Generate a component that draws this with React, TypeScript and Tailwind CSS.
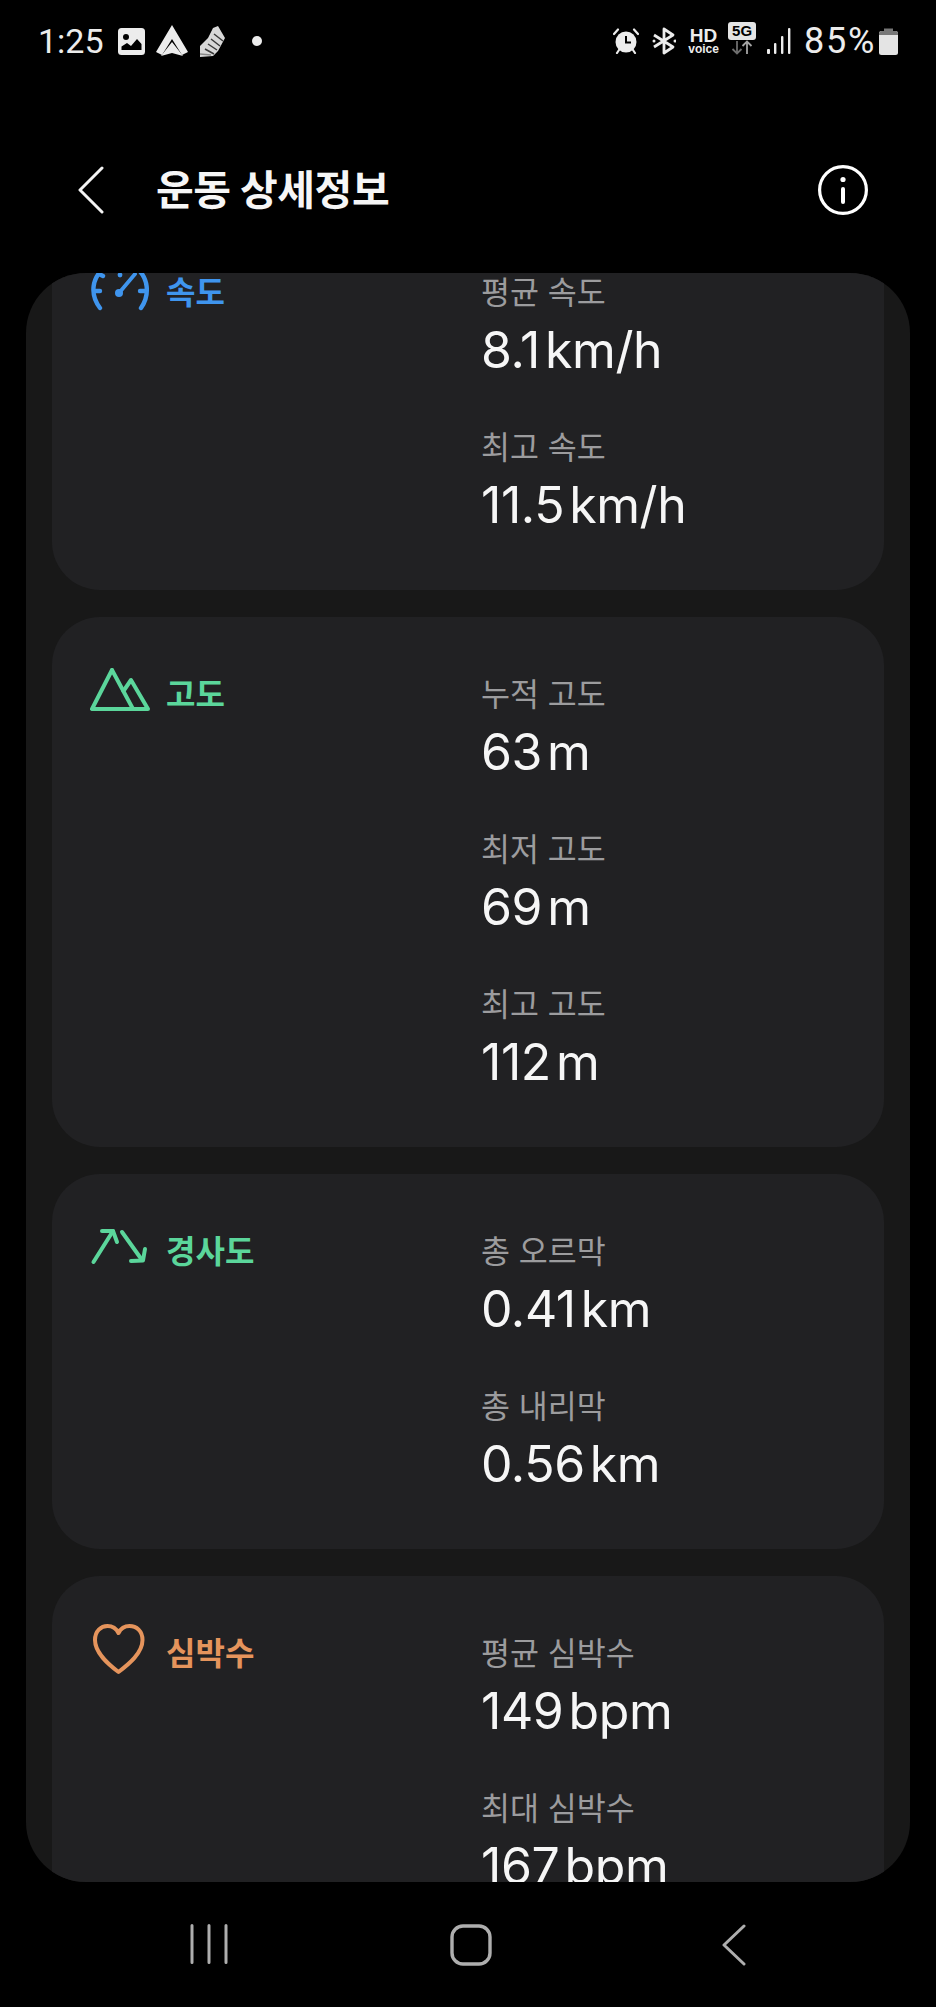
import React from "react";

const FONT = "font-['Inter','Noto_Sans_CJK_KR',sans-serif]";

function Row({ label, value, unit }: { label: string; value: string; unit: string }) {
  return (
    <div>
      <div className="h-[40px] pt-[1px] flex items-center text-[31.5px] leading-[40px] text-[#9c9c9e] whitespace-nowrap">{label}</div>
      <div className="mt-[8px] mb-[2px] h-[60px] flex items-center text-[50px] leading-[60px] text-[#f6f6f6] whitespace-nowrap tracking-[-0.4px]">
        <span>{value}</span>
        <span className="ml-[5px]">{unit}</span>
      </div>
    </div>
  );
}

type Item = { label: string; value: string; unit: string };

function Card({ icon, title, color, rows }: { icon: React.ReactNode; title: string; color: string; rows: Item[] }) {
  return (
    <div className="rounded-[48px] bg-[#212123] pt-[57px] pb-[53px] flex">
      <div className="w-[429px] pl-[38px] flex items-start gap-[17px] h-[40px] shrink-0">
        <div className="w-[60px] h-[60px] -mt-[10px] shrink-0">{icon}</div>
        <div className={`text-[32px] leading-[40px] mt-[1px] -ml-[1px] font-bold ${color}`}>{title}</div>
      </div>
      <div className="flex flex-col gap-[45px]">
        {rows.map((r) => (
          <Row key={r.label} {...r} />
        ))}
      </div>
    </div>
  );
}

const Gauge = (
  <svg viewBox="0 0 60 60" className="w-full h-full" fill="none" stroke="#3f95ee" strokeWidth="4.4" strokeLinecap="round">
    <path d="M10 46 C0 33 1 15 16 5" />
    <path d="M51 46 C60 33 59 15 45 5" />
    <path d="M4 29 H10" />
    <path d="M50 29 H56" />
    <path d="M13 14 L9 12" />
    <path d="M29 31 L45 12" strokeWidth="3.8" />
    <circle cx="29" cy="31" r="4" fill="#3f95ee" stroke="none" />
    <circle cx="30" cy="13" r="2.4" fill="#3f95ee" stroke="none" />
  </svg>
);

const Mountain = (
  <svg viewBox="0 0 60 60" className="w-full h-full" fill="none" stroke="#5bd69b" strokeWidth="4" strokeLinejoin="round" strokeLinecap="round">
    <path d="M22 6 L2 45 H58 L41 16 L33.5 27" />
    <path d="M22 6 L43 45" />
  </svg>
);

const Slope = (
  <svg viewBox="0 0 60 60" className="w-full h-full" fill="none" stroke="#5bd69b" strokeWidth="4" strokeLinejoin="round" strokeLinecap="round">
    <path d="M3.5 41 L23 10" />
    <path d="M12 10 H23 L27 21" />
    <path d="M32 11 L52 39" />
    <path d="M41 40 L53 39.5 L55 28" />
  </svg>
);

const Heart = (
  <svg viewBox="0 0 60 60" className="w-full h-full" fill="none" stroke="#e5945c" strokeWidth="4" strokeLinejoin="round">
    <path d="M28.5 49 C18 41 5 30 5 17 C5 8 11 3 17.5 3 C22.5 3 26.5 6 28.5 10 C30.5 6 34.5 3 39.5 3 C46.5 3 52.5 8 52.5 17 C52.5 30 39 41 28.5 49 Z" />
  </svg>
);

function StatusBar() {
  return (
    <div className={`h-[82px] flex items-center pl-[38px] pr-[38px] text-[#ececec] ${FONT}`}>
      <span className="font-['Roboto',sans-serif] text-[34px] leading-none w-[62px] whitespace-nowrap">1:25</span>
      <svg viewBox="0 0 27 27" className="w-[27px] h-[27px] ml-[18px]">
        <rect width="27" height="27" rx="3.5" fill="#ececec" />
        <circle cx="8" cy="9" r="3" fill="#000" />
        <path d="M3.5 22 V18.5 L9 15 L13 18 L19 11 L23.5 16 V22 Z" fill="#000" />
      </svg>
      <svg viewBox="0 0 32 32" className="w-[32px] h-[32px] ml-[11px]">
        <path d="M16 0 L32 27 L26 30 L16 14 L6 30 L0 27 Z" fill="#ececec" />
        <path d="M16 17 L27 31 L16 28 L5 31 Z" fill="#ececec" />
      </svg>
      <svg viewBox="0 0 28 34" className="w-[28px] h-[34px] ml-[11px]">
        <path d="M19 2 L26 14 L19 27 L14 32 L1 33 L1 22 L9 14 L14 4 Z" fill="#d8d8d8" />
        <path d="M15 30 L6 25 M18 26 L9 20 M21 22 L12 15 M24 17 L15 10" stroke="#3a3a3a" strokeWidth="1.5" />
        <path d="M1 30 L12 31" stroke="#888" strokeWidth="1.5" />
      </svg>
      <span className="w-[10px] h-[10px] rounded-full bg-[#ececec] ml-[25px]" />
      <div className="flex-1" />
      <svg viewBox="0 0 26 26" className="w-[26px] h-[26px]">
        <circle cx="13" cy="14" r="10.5" fill="#ececec" />
        <path d="M13 8 V14.5 H18" fill="none" stroke="#000" strokeWidth="2" />
        <path d="M1 6 L5 1.5 M25 6 L21 1.5 M4 25 L6 22 M22 25 L20 22" stroke="#ececec" strokeWidth="2.2" strokeLinecap="round" />
      </svg>
      <svg viewBox="0 0 24 28" className="w-[24px] h-[28px] ml-[13px]" fill="none" stroke="#ececec" strokeWidth="2.8" strokeLinejoin="round">
        <path d="M2 8 L21 20 L12 26 V2 L21 8 L2 20" />
        <circle cx="2" cy="14" r="1.5" fill="#ececec" stroke="none" />
        <circle cx="23" cy="14" r="1.5" fill="#ececec" stroke="none" />
      </svg>
      <div className="ml-[13px] w-[29px] flex flex-col items-center font-['Liberation_Sans',sans-serif] font-bold leading-none">
        <span className="text-[19px] leading-[15px]">HD</span>
        <span className="text-[12px] leading-[10px] mt-[1px]">voice</span>
      </div>
      <div className="ml-[10px] w-[28px] h-[33px] -mt-[5px] flex flex-col">
        <div className="h-[18px] rounded-[3px] bg-[#e4e4e4] text-black text-[15px] leading-[18px] text-center font-bold font-['Liberation_Sans',sans-serif]">5G</div>
        <svg viewBox="0 0 28 15" className="w-[28px] h-[15px]" fill="none" strokeWidth="1.8">
          <path d="M9 1 V13 M4.5 9 L9 13.5 L13.5 9" stroke="#6e6e6e" />
          <path d="M19 14 V2 M14.5 6 L19 1.5 L23.5 6" stroke="#a5a5a5" />
        </svg>
      </div>
      <svg viewBox="0 0 24 26" className="w-[24px] h-[26px] ml-[11px]">
        <rect x="0" y="21" width="3" height="5" rx="1" fill="#ececec" />
        <rect x="7" y="15" width="2.4" height="11" rx="1" fill="#ececec" />
        <rect x="14" y="8" width="2.4" height="18" rx="1" fill="#ececec" />
        <rect x="21" y="0" width="2.4" height="26" rx="1" fill="#ececec" />
      </svg>
      <span className="font-['Roboto',sans-serif] text-[36px] leading-none tracking-[1.7px] ml-[13px] whitespace-nowrap">85%</span>
      <svg viewBox="0 0 19 27" className="w-[19px] h-[27px] ml-[3px]">
        <path d="M5 0.5 H14 V4 H5 Z" fill="#777" />
        <rect x="0" y="3" width="19" height="24" rx="2.5" fill="#e4e4e4" />
        <path d="M2.5 3 H16.5 Q19 3 19 5.5 V7 H0 V5.5 Q0 3 2.5 3 Z" fill="#777" />
      </svg>
    </div>
  );
}

function Header() {
  return (
    <div className="h-[191px] pt-[25px] flex items-center pl-[78px] pr-[68px]">
      <svg viewBox="0 0 26 48" className="w-[26px] h-[48px]" fill="none" stroke="#f4f4f4" strokeWidth="3" strokeLinecap="round" strokeLinejoin="round">
        <path d="M24 2 L2 24 L24 46" />
      </svg>
      <div className="ml-[52px] text-[41px] leading-none font-bold text-[#f6f6f6] tracking-[-0.4px] whitespace-nowrap">운동 상세정보</div>
      <div className="flex-1" />
      <svg viewBox="0 0 50 50" className="w-[50px] h-[50px]" fill="none" stroke="#fff" strokeWidth="3.2" strokeLinecap="round">
        <circle cx="25" cy="25" r="23.4" />
        <path d="M25 24 V37" strokeWidth="4" />
        <circle cx="25" cy="14.5" r="2.6" fill="#fff" stroke="none" />
      </svg>
    </div>
  );
}

function NavBar() {
  return (
    <div className="flex-1 relative flex items-start pt-[42px] pl-[190px]">
      <svg viewBox="0 0 38 40" className="w-[38px] h-[40px]" fill="none" stroke="#aeaeae" strokeWidth="3" strokeLinecap="round">
        <path d="M2 1.5 V38.5 M19 1.5 V38.5 M36 1.5 V38.5" />
      </svg>
      <svg viewBox="0 0 42 42" className="w-[42px] h-[42px] ml-[222px]" fill="none" stroke="#aeaeae" strokeWidth="3.4">
        <rect x="2" y="2" width="38" height="38" rx="11" />
      </svg>
      <svg viewBox="0 0 24 42" className="w-[24px] h-[42px] ml-[230px]" fill="none" stroke="#aeaeae" strokeWidth="3" strokeLinecap="round" strokeLinejoin="round">
        <path d="M22 2 L2 21 L22 40" />
      </svg>
    </div>
  );
}

export default function App() {
  return (
    <div className={`w-[936px] h-[2007px] bg-black flex flex-col overflow-hidden ${FONT}`}>
      <StatusBar />
      <Header />
      <div className="mx-[26px] h-[1609px] shrink-0 rounded-[60px] bg-[#181818] overflow-hidden">
        <div className="px-[26px] -mt-[58px] flex flex-col gap-[27px]">
          <Card
            icon={Gauge}
            title="속도"
            color="text-[#3f95ee]"
            rows={[
              { label: "평균 속도", value: "8.1", unit: "km/h" },
              { label: "최고 속도", value: "11.5", unit: "km/h" },
            ]}
          />
          <Card
            icon={Mountain}
            title="고도"
            color="text-[#5bd69b]"
            rows={[
              { label: "누적 고도", value: "63", unit: "m" },
              { label: "최저 고도", value: "69", unit: "m" },
              { label: "최고 고도", value: "112", unit: "m" },
            ]}
          />
          <Card
            icon={Slope}
            title="경사도"
            color="text-[#5bd69b]"
            rows={[
              { label: "총 오르막", value: "0.41", unit: "km" },
              { label: "총 내리막", value: "0.56", unit: "km" },
            ]}
          />
          <Card
            icon={Heart}
            title="심박수"
            color="text-[#e5945c]"
            rows={[
              { label: "평균 심박수", value: "149", unit: "bpm" },
              { label: "최대 심박수", value: "167", unit: "bpm" },
            ]}
          />
        </div>
      </div>
      <NavBar />
    </div>
  );
}
